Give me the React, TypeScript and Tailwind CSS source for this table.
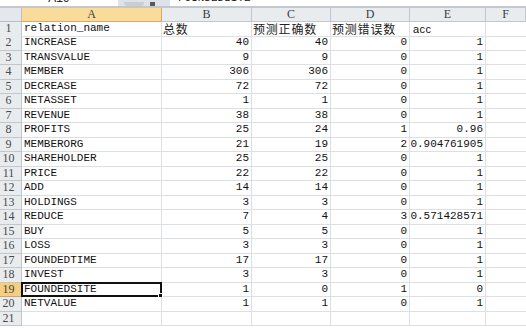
import React from 'react';

type Row = [string, string, string, string, string];

const rows: Row[] = [
  ['relation_name', '总数', '预测正确数', '预测错误数', 'acc'],
  ['INCREASE', '40', '40', '0', '1'],
  ['TRANSVALUE', '9', '9', '0', '1'],
  ['MEMBER', '306', '306', '0', '1'],
  ['DECREASE', '72', '72', '0', '1'],
  ['NETASSET', '1', '1', '0', '1'],
  ['REVENUE', '38', '38', '0', '1'],
  ['PROFITS', '25', '24', '1', '0.96'],
  ['MEMBERORG', '21', '19', '2', '0.904761905'],
  ['SHAREHOLDER', '25', '25', '0', '1'],
  ['PRICE', '22', '22', '0', '1'],
  ['ADD', '14', '14', '0', '1'],
  ['HOLDINGS', '3', '3', '0', '1'],
  ['REDUCE', '7', '4', '3', '0.571428571'],
  ['BUY', '5', '5', '0', '1'],
  ['LOSS', '3', '3', '0', '1'],
  ['FOUNDEDTIME', '17', '17', '0', '1'],
  ['INVEST', '3', '3', '0', '1'],
  ['FOUNDEDSITE', '1', '0', '1', '0'],
  ['NETVALUE', '1', '1', '0', '1'],
  ['', '', '', '', ''],
];

const mono = "font-['Liberation_Mono','Noto_Sans_CJK_SC',monospace]";
const cjk = "font-['Noto_Sans_CJK_SC',sans-serif]";
const cols = 'grid grid-cols-[22px_140px_90px_79px_79px_76px_1fr]';

export default function App() {
  return (
    <div className="w-[526px] h-[328px] overflow-hidden bg-white select-none">
      {/* formula bar, only its lower edge is in view */}
      <div className="flex h-[6px] overflow-hidden bg-white">
        <div className="w-[118px] flex justify-center">
          <span className="-mt-[9px] text-[12px] leading-[14px] text-[#222] font-['Liberation_Sans',sans-serif]">A19</span>
        </div>
        <div className="w-[52px] flex items-end gap-[6px] px-[6px] bg-[#dfe3e8]">
          <div className="h-[4px] w-[20px] rounded-b-[3px] bg-[#c9ced5]" />
          <div className="h-[4px] w-[5px] bg-[#5a5a5a]" />
        </div>
        <div className="flex-1 pl-[8px]">
          <span className={`-mt-[8px] block text-[11px] leading-[13px] text-[#111] ${mono}`}>FOUNDEDSITE</span>
        </div>
      </div>
      <div className="h-[2px] bg-[#c3c8cf]" />

      {/* column headers */}
      <div className={`${cols} h-[14px] font-['Liberation_Serif',serif] text-[12px] leading-[13px] text-[#3c3c3c]`}>
        <div className="bg-[#e4e7eb] border-r border-b border-[#b9bfc7]" />
        {['A', 'B', 'C', 'D', 'E', 'F'].map((c) => (
          <div
            key={c}
            className={
              c === 'A'
                ? 'bg-[#f9dc9c] border-r border-b border-[#e3a94b] text-center'
                : 'bg-[#e9ecef] border-r border-b border-[#c2c7ce] text-center'
            }
          >
            {c}
          </div>
        ))}
      </div>

      {/* sheet rows */}
      {rows.map((r, i) => {
        const sel = i === 18;
        const isHead = i === 0;
        return (
          <div key={i} className={`${cols} ${i % 2 === 0 ? 'h-[14px]' : 'h-[15px]'} text-[11px] leading-[13px] text-[#111]`}>
            <div
              className={
                sel
                  ? "bg-[#f5cf7f] border-r border-b border-[#d9a54a] pr-[4px] text-center font-['Liberation_Serif',serif] text-[12px] text-[#444]"
                  : "bg-[#e9ecef] border-r border-b border-[#c2c7ce] pr-[4px] text-center font-['Liberation_Serif',serif] text-[12px] text-[#4a4a4a]"
              }
            >
              {i + 1}
            </div>
            <div className={`relative border-r border-b border-[#dcdfe3] pl-[2px] ${mono}`}>
              {r[0]}
              {sel && (
                <div className="absolute -left-px -top-px -right-px -bottom-px border-2 border-[#111]">
                  <div className="absolute -right-[3px] -bottom-[3px] w-[5px] h-[5px] bg-[#111] border border-white" />
                </div>
              )}
            </div>
            {isHead ? (
              <>
                <div className={`border-r border-b border-[#dcdfe3] pl-[1px] text-[12px] leading-[13px] tracking-[0.8px] text-[#222] ${cjk}`}>{r[1]}</div>
                <div className={`border-r border-b border-[#dcdfe3] pl-[1px] text-[12px] leading-[13px] tracking-[0.8px] text-[#222] ${cjk}`}>{r[2]}</div>
                <div className={`border-r border-b border-[#dcdfe3] pl-[1px] text-[12px] leading-[13px] tracking-[0.8px] text-[#222] ${cjk}`}>{r[3]}</div>
                <div className="border-r border-b border-[#dcdfe3] pl-[3px] pt-[1px] text-[11px] font-['Liberation_Sans',sans-serif] tracking-[0.5px]">{r[4]}</div>
              </>
            ) : (
              <>
                <div className={`border-r border-b border-[#dcdfe3] pr-[2px] text-right ${mono}`}>{r[1]}</div>
                <div className={`border-r border-b border-[#dcdfe3] pr-[2px] text-right ${mono}`}>{r[2]}</div>
                <div className={`border-r border-b border-[#dcdfe3] pr-[2px] text-right ${mono}`}>{r[3]}</div>
                <div className={`border-r border-b border-[#dcdfe3] pr-[2px] text-right ${mono}`}>{r[4]}</div>
              </>
            )}
            <div className="border-b border-[#dcdfe3]" />
          </div>
        );
      })}
    </div>
  );
}
